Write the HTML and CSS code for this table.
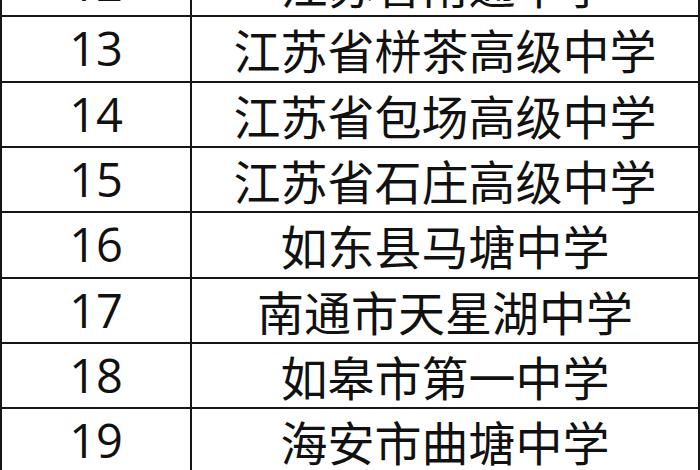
FILE: index.html
```html
<!DOCTYPE html>
<html lang="zh-CN">
<head>
<meta charset="utf-8">
<link rel="stylesheet" href="styles.css">
</head>
<body>
<table class="list">
  <tr><td class="num">12</td><td class="name">江苏省南通中学</td></tr>
  <tr><td class="num">13</td><td class="name">江苏省栟茶高级中学</td></tr>
  <tr><td class="num">14</td><td class="name">江苏省包场高级中学</td></tr>
  <tr><td class="num">15</td><td class="name">江苏省石庄高级中学</td></tr>
  <tr><td class="num">16</td><td class="name">如东县马塘中学</td></tr>
  <tr><td class="num">17</td><td class="name">南通市天星湖中学</td></tr>
  <tr><td class="num">18</td><td class="name">如皋市第一中学</td></tr>
  <tr><td class="num">19</td><td class="name">海安市曲塘中学</td></tr>
</table>
</body>
</html>
```
FILE: styles.css
```css
html, body {
  margin: 0;
  padding: 0;
  background: #fff;
  overflow: hidden;
}
.list {
  border-collapse: collapse;
  width: 700px;
  margin-top: -50px;
  table-layout: fixed;
  color: #111;
  font-family: "Open Sans", "Noto Sans CJK SC", sans-serif;
  font-size: 47px;
}
.list td {
  border: 2px solid #161616;
  height: 63.33px;
  padding: 0;
  text-align: center;
  vertical-align: middle;
  line-height: 1;
  white-space: nowrap;
}
.list .num {
  width: 188px;
}
.list .name {
  font-family: "Noto Sans CJK SC", sans-serif;
}
```
